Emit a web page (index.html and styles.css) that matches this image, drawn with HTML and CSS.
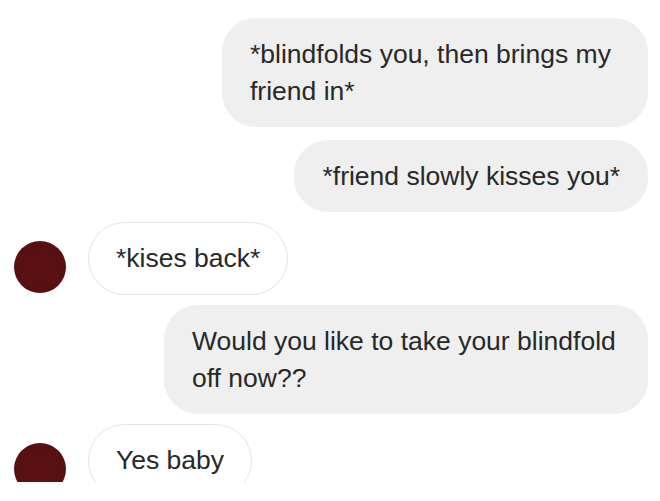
FILE: index.html
```html
<!DOCTYPE html>
<html>
<head>
<meta charset="utf-8">
<link rel="stylesheet" href="styles.css">
</head>
<body>
<div class="chat">
  <div class="row sent">
    <div class="bubble filled narrow">*blindfolds you, then brings my friend in*</div>
  </div>
  <div class="row sent gap-lg">
    <div class="bubble filled">*friend slowly kisses you*</div>
  </div>
  <div class="row recv">
    <div class="avatar"></div>
    <div class="bubble outline">*kises back*</div>
  </div>
  <div class="row sent">
    <div class="bubble filled">Would you like to take your blindfold off now??</div>
  </div>
  <div class="row recv">
    <div class="avatar"></div>
    <div class="bubble outline">Yes baby</div>
  </div>
</div>
</body>
</html>
```
FILE: styles.css
```css
html, body {
  margin: 0;
  padding: 0;
  background: #ffffff;
}
.chat {
  height: 482px;
  overflow: hidden;
  padding: 18px 12px 0 14px;
  box-sizing: border-box;
  display: flex;
  flex-direction: column;
  gap: 10px;
  font-family: "Liberation Sans", Arial, sans-serif;
  font-size: 26.5px;
  line-height: 37px;
  color: #282828;
}
.row {
  display: flex;
  align-items: flex-end;
}
.row.sent {
  justify-content: flex-end;
}
.row.gap-lg {
  margin-top: 3px;
}
.row.recv {
  gap: 22px;
}
.bubble {
  box-sizing: border-box;
  border-radius: 34px;
  padding: 17.5px 28px;
  max-width: 484px;
}
.bubble.narrow {
  max-width: 426px;
}
.filled {
  background: #efefef;
}
.outline {
  background: #ffffff;
  border: 1.5px solid #e3e3e3;
  border-radius: 37px;
  padding: 17px 27px;
}
.avatar {
  flex: none;
  width: 52px;
  height: 52px;
  border-radius: 50%;
  background: radial-gradient(circle at 50% 50%, #5e1011 0%, #561012 70%, #3a0a0b 100%);
  margin-bottom: 2px;
}
```
